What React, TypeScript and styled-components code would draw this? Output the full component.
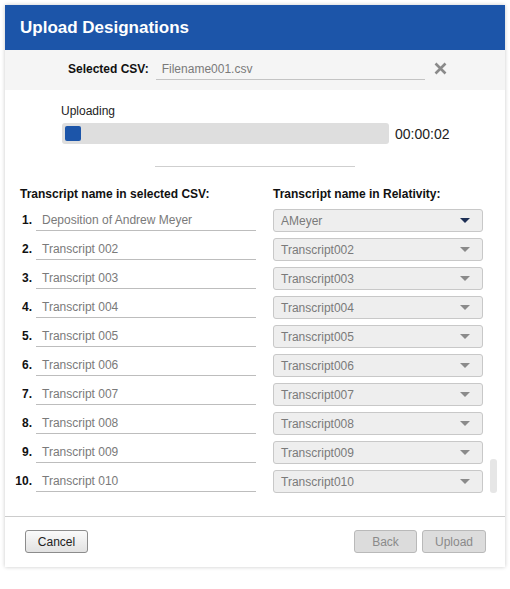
import { Fragment } from 'react';
import styled, { createGlobalStyle } from 'styled-components';

const GlobalStyle = createGlobalStyle`
  body {
    margin: 0;
    background: #ffffff;
    font-family: "Liberation Sans", Arial, sans-serif;
  }
`;

const blue = '#1c55a9';

const Dialog = styled.div`
  position: relative;
  margin: 5px;
  width: 500px;
  background: #ffffff;
  box-shadow: 0 0 4px rgba(0, 0, 0, 0.22);
`;

const Header = styled.header`
  display: flex;
  align-items: center;
  height: 45px;
  padding-left: 15px;
  background: ${blue};
  color: #ffffff;

  h1 {
    margin: 0;
    font-size: 17px;
    font-weight: bold;
  }
`;

const CsvBar = styled.div`
  display: flex;
  align-items: center;
  height: 40px;
  padding-left: 63px;
  background: #f5f5f5;
`;

const CsvLabel = styled.span`
  font-size: 12px;
  font-weight: bold;
  color: #111;
  margin-right: 7px;
  margin-top: -3px;
`;

const CsvInput = styled.div`
  width: 263px;
  height: 16px;
  padding: 0 0 2px 6px;
  border-bottom: 1px solid #c4c4c4;
  font-size: 12px;
  line-height: 16px;
  color: #7a7a7a;
`;

const ClearButton = styled.button`
  display: flex;
  margin-left: 9px;
  margin-top: -3px;
  padding: 0;
  border: none;
  background: none;
`;

const UploadSection = styled.div`
  padding: 14px 0 0 56px;
`;

const UploadLabel = styled.div`
  font-size: 12px;
  line-height: 14px;
  color: #222;
`;

const ProgressRow = styled.div`
  display: flex;
  align-items: center;
  gap: 6px;
  margin-top: 5px;
`;

const ProgressTrack = styled.div`
  width: 327px;
  height: 21px;
  margin-left: 1px;
  padding: 3px;
  box-sizing: border-box;
  border-radius: 3px;
  background: #dedede;
`;

const ProgressFill = styled.div`
  height: 15px;
  border-radius: 2px;
  background: ${blue};
`;

const Timer = styled.span`
  font-size: 14px;
  color: #222;
`;

const Divider = styled.hr`
  width: 200px;
  margin: 22px auto 0;
  border: none;
  border-top: 1px solid #cfcfcf;
`;

const Mapping = styled.div`
  position: relative;
  padding: 20px 0 0 10px;
`;

const Grid = styled.div`
  display: grid;
  grid-template-columns: 17px 220px 223px;
  column-gap: 4px;
  row-gap: 6px;
`;

const ColumnTitle = styled.div<{ $indent: number; $span?: boolean }>`
  grid-column: ${(p) => (p.$span ? 'span 2' : 'auto')};
  padding-left: ${(p) => p.$indent}px;
  margin-bottom: 2px;
  font-size: 12px;
  font-weight: bold;
  line-height: 14px;
  color: #111;
  white-space: nowrap;
`;

const RowNumber = styled.span`
  margin-top: 1px;
  font-size: 12px;
  font-weight: bold;
  line-height: 20px;
  text-align: right;
  color: #111;
`;

const NameInput = styled.div`
  height: 20px;
  margin-top: 1px;
  padding-left: 6px;
  border-bottom: 1px solid #bdbdbd;
  font-size: 12px;
  line-height: 20px;
  color: #7a7a7a;
`;

const Select = styled.div`
  display: flex;
  align-items: center;
  justify-content: space-between;
  width: 210px;
  height: 23px;
  margin-left: 13px;
  padding: 0 12px 0 7px;
  box-sizing: border-box;
  border: 1px solid #c8c8c8;
  border-radius: 3px;
  background: #eeeeee;
  font-size: 12px;
  color: #7a7a7a;
`;

const Caret = styled.span<{ $active?: boolean }>`
  width: 0;
  height: 0;
  border-left: 5px solid transparent;
  border-right: 5px solid transparent;
  border-top: 5px solid ${(p) => (p.$active ? '#1d2f55' : '#8a8a8a')};
`;

const ScrollThumb = styled.div`
  position: absolute;
  right: 8px;
  bottom: 0;
  width: 7px;
  height: 34px;
  border-radius: 3px;
  background: #e6e6e6;
`;

const Footer = styled.footer`
  display: flex;
  justify-content: space-between;
  margin-top: 23px;
  padding: 13px 19px 14px 20px;
  border-top: 1px solid #cccccc;
`;

const ButtonGroup = styled.div`
  display: flex;
  gap: 5px;
`;

const Button = styled.button<{ $disabled?: boolean; $width?: number }>`
  width: ${(p) => p.$width ?? 63}px;
  height: 23px;
  padding: 0;
  border: 1px solid ${(p) => (p.$disabled ? '#b9b9b9' : '#8c8c8c')};
  border-radius: 3px;
  background: ${(p) =>
    p.$disabled ? '#dcdcdc' : 'linear-gradient(#fafafa, #e2e2e2)'};
  font-family: "Liberation Sans", Arial, sans-serif;
  font-size: 12px;
  color: ${(p) => (p.$disabled ? '#8a8a8a' : '#222')};
`;

const rows = [
  { name: 'Deposition of Andrew Meyer', match: 'AMeyer' },
  ...Array.from({ length: 9 }, (_, i) => {
    const n = String(i + 2).padStart(3, '0');
    return { name: `Transcript ${n}`, match: `Transcript${n}` };
  }),
];

const CloseIcon = () => (
  <svg width="13" height="13" viewBox="0 0 13 13">
    <path d="M1.5 1.5 L11.5 11.5 M11.5 1.5 L1.5 11.5" stroke="#8a8a8a" strokeWidth="2.6" />
  </svg>
);

const App = () => {
  return (
    <>
      <GlobalStyle />
      <Dialog>
        <Header>
          <h1>Upload Designations</h1>
        </Header>
        <CsvBar>
          <CsvLabel>Selected CSV:</CsvLabel>
          <CsvInput>Filename001.csv</CsvInput>
          <ClearButton aria-label="Clear">
            <CloseIcon />
          </ClearButton>
        </CsvBar>
        <UploadSection>
          <UploadLabel>Uploading</UploadLabel>
          <ProgressRow>
            <ProgressTrack>
              <ProgressFill style={{ width: '16px' }} />
            </ProgressTrack>
            <Timer>00:00:02</Timer>
          </ProgressRow>
        </UploadSection>
        <Divider />
        <Mapping>
          <Grid>
            <ColumnTitle $indent={5} $span>
              Transcript name in selected CSV:
            </ColumnTitle>
            <ColumnTitle $indent={13}>Transcript name in Relativity:</ColumnTitle>
            {rows.map((row, i) => (
              <Fragment key={row.match}>
                <RowNumber>{i + 1}.</RowNumber>
                <NameInput>{row.name}</NameInput>
                <Select>
                  {row.match}
                  <Caret $active={i === 0} />
                </Select>
              </Fragment>
            ))}
          </Grid>
          <ScrollThumb />
        </Mapping>
        <Footer>
          <Button>Cancel</Button>
          <ButtonGroup>
            <Button $disabled>Back</Button>
            <Button $disabled $width={64}>
              Upload
            </Button>
          </ButtonGroup>
        </Footer>
      </Dialog>
    </>
  );
};

export default App;
